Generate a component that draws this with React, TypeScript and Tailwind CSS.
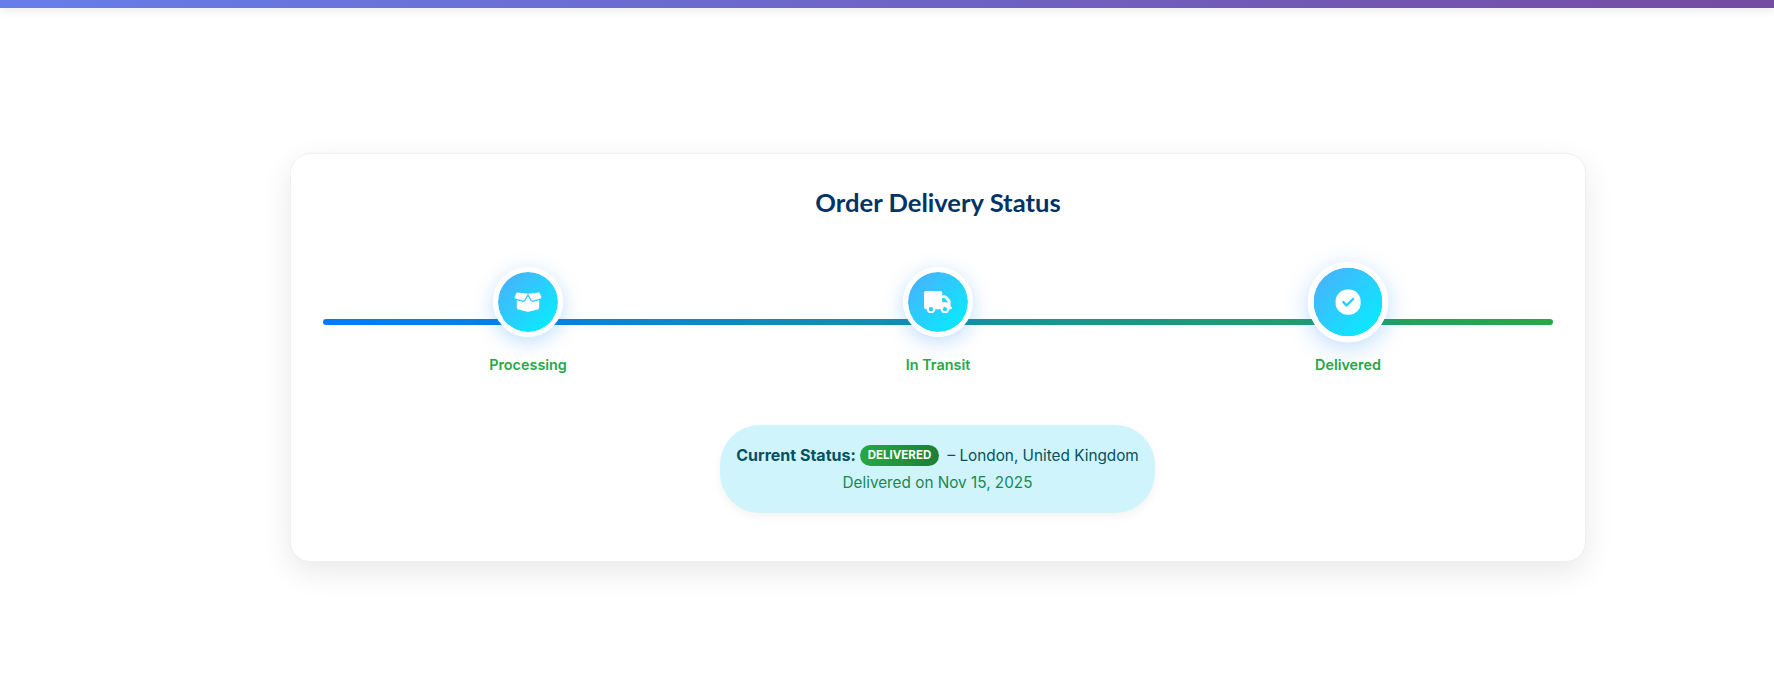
import React from 'react';
import { FaBoxOpen, FaTruck, FaCircleCheck } from 'react-icons/fa6';

const steps = [
  { label: 'Processing', icon: FaBoxOpen, iconClass: 'h-[22.4px] w-7' },
  { label: 'In Transit', icon: FaTruck, iconClass: 'h-[22.4px] w-7' },
  { label: 'Delivered', icon: FaCircleCheck, iconClass: 'size-[22.4px]', current: true },
];

export default function App() {
  return (
    <div className="min-h-[691px] bg-white font-['Inter',sans-serif]">
      <div className="h-2 bg-[linear-gradient(90deg,#667eea,#764ba2)] shadow-[0_2px_10px_rgba(0,0,0,0.1)]" />

      <div className="mt-[145px] ml-[290px] w-[1296px] rounded-[20px] border border-[#f0f0f0] bg-white px-8 pt-[30px] pb-[48px] shadow-[0_10px_30px_rgba(0,0,0,0.09)]">
        <h2 className="text-center font-['Lato',sans-serif] text-[25.6px] leading-[36px] font-bold text-[#003366]">
          Order Delivery Status
        </h2>

        <div className="relative mt-[47px] flex justify-around">
          <div className="absolute top-[52px] right-0 left-0 h-1.5 rounded-full bg-[linear-gradient(90deg,#007bff,#28a745)]" />
          {steps.map((step) => {
            const Icon = step.icon;
            return (
              <div key={step.label} className="relative flex w-[410px] flex-col items-center">
                <div
                  className={
                    step.current
                      ? 'flex size-[70px] scale-[1.15] items-center justify-center rounded-full border-[5px] border-white bg-[linear-gradient(135deg,#4facfe,#00f2fe)] bg-clip-padding text-white shadow-[0_5px_20px_rgba(0,123,255,0.25)]'
                      : 'flex size-[70px] items-center justify-center rounded-full border-[5px] border-white bg-[linear-gradient(135deg,#4facfe,#00f2fe)] bg-clip-padding text-white shadow-[0_5px_20px_rgba(0,123,255,0.25)]'
                  }
                >
                  <Icon className={step.iconClass} />
                </div>
                <span className="mt-[17px] text-[14.4px] leading-[22px] font-semibold text-[#28a745]">{step.label}</span>
              </div>
            );
          })}
        </div>

        <div className="mt-[49px] flex justify-center">
          <div className="mr-px w-[435px] rounded-[40px] bg-[#cff4fc] pt-[17px] pb-[17px] text-center text-[15.3px] leading-[27px] text-[#055160] shadow-[0_4px_10px_rgba(0,0,0,0.05)]">
            <div className="flex items-center justify-center whitespace-nowrap">
              <strong className="text-[16px] font-bold">Current Status:</strong>
              <span className="mx-1 rounded-full bg-[linear-gradient(90deg,#28a745,#1e7e34)] px-2 text-[11.5px] leading-[21px] font-bold text-white">
                DELIVERED
              </span>
              <span>&nbsp;– London, United Kingdom</span>
            </div>
            <div className="text-[#198754]">Delivered on Nov 15, 2025</div>
          </div>
        </div>
      </div>
    </div>
  );
}
